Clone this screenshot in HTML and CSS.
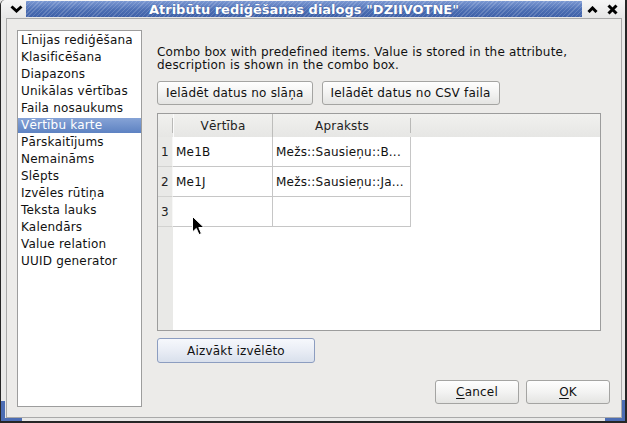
FILE: index.html
```html
<!DOCTYPE html>
<html lang="lv">
<head>
<meta charset="utf-8">
<title>Atribūtu rediģēšanas dialogs</title>
<link rel="stylesheet" href="styles.css">
</head>
<body>
<div class="window">
  <div class="titlebar">
    <div class="tb-btn tb-menu">
      <svg width="13" height="8" viewBox="0 0 13 8"><polyline points="1.5,1.5 6.5,6 11.5,1.5" fill="none" stroke="#000" stroke-width="3"/></svg>
    </div>
    <div class="tb-title">Atribūtu rediģēšanas dialogs "DZIIVOTNE"</div>
    <div class="tb-btn tb-shade">
      <svg width="11" height="7" viewBox="0 0 11 7"><polyline points="1.5,6 5.5,2 9.5,6" fill="none" stroke="#000" stroke-width="3"/></svg>
    </div>
    <div class="tb-btn tb-close">
      <svg width="11" height="11" viewBox="0 0 11 11"><path d="M1.5 1.5 L9.5 9.5 M9.5 1.5 L1.5 9.5" stroke="#000" stroke-width="3"/></svg>
    </div>
  </div>

  <div class="client">
    <ul class="widget-list">
      <li>Līnijas rediģēšana</li>
      <li>Klasificēšana</li>
      <li>Diapazons</li>
      <li>Unikālas vērtības</li>
      <li>Faila nosaukums</li>
      <li class="selected">Vērtību karte</li>
      <li>Pārskaitījums</li>
      <li>Nemaināms</li>
      <li>Slēpts</li>
      <li>Izvēles rūtiņa</li>
      <li>Teksta lauks</li>
      <li>Kalendārs</li>
      <li>Value relation</li>
      <li>UUID generator</li>
    </ul>

    <div class="panel">
      <p class="desc">Combo box with predefined items. Value is stored in the attribute,<br>description is shown in the combo box.</p>
      <div class="load-row">
        <button class="btn load">Ielādēt datus no slāņa</button>
        <button class="btn load">Ielādēt datus no CSV faila</button>
      </div>

      <div class="grid">
        <div class="grid-head">
          <div class="corner"></div>
          <div class="hcell c1">Vērtība</div>
          <div class="hcell c2">Apraksts</div>
        </div>
        <div class="grid-row">
          <div class="rnum">1</div>
          <div class="cell c1">Me1B</div>
          <div class="cell c2">Mežs::Sausieņu::B...</div>
        </div>
        <div class="grid-row">
          <div class="rnum">2</div>
          <div class="cell c1">Me1J</div>
          <div class="cell c2">Mežs::Sausieņu::Ja...</div>
        </div>
        <div class="grid-row">
          <div class="rnum">3</div>
          <div class="cell c1"></div>
          <div class="cell c2"></div>
        </div>
      </div>

      <button class="btn remove">Aizvākt izvēlēto</button>

      <div class="dialog-buttons">
        <button class="btn dlg"><u>C</u>ancel</button>
        <button class="btn dlg"><u>O</u>K</button>
      </div>
    </div>
  </div>

  <span class="grip grip-left"></span>
  <span class="grip grip-right"></span>

  <svg class="pointer" width="13" height="20" viewBox="0 0 13 20">
    <path d="M0.5 0.5 L0.5 16 L4.3 12.4 L7 18.6 L9.4 17.5 L6.8 11.5 L12 11.5 Z" fill="#000" stroke="#fff" stroke-width="1"/>
  </svg>
</div>
</body>
</html>
```

FILE: styles.css
```css
html, body {
  margin: 0;
  padding: 0;
  background: #e8e8e8;
  overflow: hidden;
}

body {
  font-family: "DejaVu Sans", "Liberation Sans", sans-serif;
  font-size: 12px;
  letter-spacing: 0.2px;
  color: #1a1a1a;
}

/* window frame */
.window {
  position: relative;
  width: 627px;
  height: 423px;
  box-sizing: border-box;
  display: flex;
  flex-direction: column;
  background: #e9e9e8;
  border-left: 1px solid #262626;
  border-right: 2px solid #262626;
  border-bottom: 2px solid #262626;
  border-top-left-radius: 5px;
}

.titlebar {
  height: 18px;
  display: flex;
  align-items: stretch;
  flex: none;
  padding-right: 3px;
  background: linear-gradient(#f6f6f6, #e6e6e6);
  border-top-left-radius: 5px;
}

.tb-btn {
  display: flex;
  align-items: center;
  justify-content: center;
}

.tb-menu {
  width: 25px;
  padding-left: 5px;
  box-sizing: border-box;
}

.tb-shade,
.tb-close {
  width: 20px;
}

.tb-title {
  flex: 1;
  margin: 1px 0 1px;
  display: flex;
  align-items: center;
  justify-content: center;
  color: #fff;
  font-weight: bold;
  font-size: 13px;
  letter-spacing: 0;
  white-space: nowrap;
  text-shadow: 0 0 1px #2b4a8a;
  background:
    repeating-linear-gradient(135deg, rgba(255,255,255,0.16) 0 1px, rgba(255,255,255,0) 1px 3px),
    linear-gradient(#7b98d2, #4d6fb4 55%, #3f61a8);
}

/* dialog client area */
.client {
  flex: 1;
  margin: 0 3px 3px 5px;
  border: 1px solid #a9a9a9;
  background: #ecebe9;
  display: flex;
  gap: 15px;
  padding: 11px 11px 10px 10px;
  min-height: 0;
}

.widget-list {
  list-style: none;
  margin: 0;
  width: 125px;
  box-sizing: border-box;
  padding: 2px 0;
  background: #fff;
  border: 1px solid #9d9d9d;
  flex: none;
}

.widget-list li {
  height: 15px;
  line-height: 15px;
  margin-bottom: 2px;
  padding-left: 3px;
  white-space: nowrap;
  color: #111;
}

.widget-list li.selected {
  color: #fff;
  background: linear-gradient(#86a3d6, #5d82c2);
}

.panel {
  flex: 1;
  display: flex;
  flex-direction: column;
  padding-top: 16px;
}

.desc {
  margin: 0;
  line-height: 13px;
  color: #111;
}

/* buttons */
.btn {
  font-family: inherit;
  font-size: 12px;
  letter-spacing: 0.2px;
  color: #111;
  height: 24px;
  box-sizing: border-box;
  border: 1px solid #a4a4a2;
  border-radius: 3px;
  background: linear-gradient(#fefefe, #f3f3f2 50%, #e4e4e2);
  padding: 0 8px;
  margin: 0;
  white-space: nowrap;
}

.load-row {
  display: flex;
  gap: 9px;
  margin-top: 9px;
}

.remove {
  margin-top: 7px;
  width: 158px;
  height: 25px;
  border-color: #8c9dc0;
  background: linear-gradient(#f6f8fc, #e9edf5 50%, #d9e0ec);
}

.dialog-buttons {
  display: flex;
  justify-content: flex-end;
  gap: 7px;
  margin-top: 17px;
}

.dlg {
  width: 84px;
}

.dlg u {
  text-decoration-thickness: 1px;
  text-underline-offset: 2px;
}

/* value map table */
.grid {
  margin-top: 8px;
  width: 444px;
  height: 218px;
  box-sizing: border-box;
  border: 1px solid #9c9c9c;
  background: linear-gradient(to right, #e9e9e7 15px, #fff 15px);
}

.grid-head {
  display: flex;
  height: 23px;
  background: linear-gradient(#f1f1ef, #e6e6e4);
}

.corner {
  width: 15px;
  position: relative;
}

.hcell {
  display: flex;
  align-items: center;
  justify-content: center;
  color: #222;
  position: relative;
}

.corner::after,
.hcell.c2::after {
  content: "";
  position: absolute;
  right: 0;
  top: 4px;
  bottom: 4px;
  width: 1px;
  background: #b9b9b7;
}

.hcell.c1 {
  border-left: 1px solid #fbfbfb;
  border-right: 1px solid #bdbdbb;
}

.c1 {
  width: 100px;
  box-sizing: border-box;
}

.c2 {
  width: 138px;
  box-sizing: border-box;
}

.grid-row {
  display: flex;
  height: 30px;
}

.rnum {
  width: 15px;
  box-sizing: border-box;
  border-right: 1px solid #f7f7f6;
  border-bottom: 1px solid #d2d2d0;
  display: flex;
  align-items: center;
  justify-content: center;
  color: #222;
}

.cell {
  display: flex;
  align-items: center;
  padding-left: 3px;
  border-right: 1px solid #c6c6c6;
  border-bottom: 1px solid #c6c6c6;
  white-space: nowrap;
  overflow: hidden;
  color: #111;
}

/* resize grips on the frame corners */
.grip {
  position: absolute;
  background: #4c6db4;
}

.grip-left {
  left: 0;
  bottom: 0;
  width: 21px;
  height: 20px;
  background:
    linear-gradient(#4c6db4, #4c6db4) left bottom / 21px 3px no-repeat,
    linear-gradient(#4c6db4, #4c6db4) left bottom / 4px 20px no-repeat;
}

.grip-right {
  right: 0;
  bottom: 0;
  width: 20px;
  height: 21px;
  background:
    linear-gradient(#4c6db4, #4c6db4) right bottom / 20px 3px no-repeat,
    linear-gradient(#4c6db4, #4c6db4) right bottom / 3px 21px no-repeat;
}

.pointer {
  position: absolute;
  left: 191px;
  top: 216px;
}
```
